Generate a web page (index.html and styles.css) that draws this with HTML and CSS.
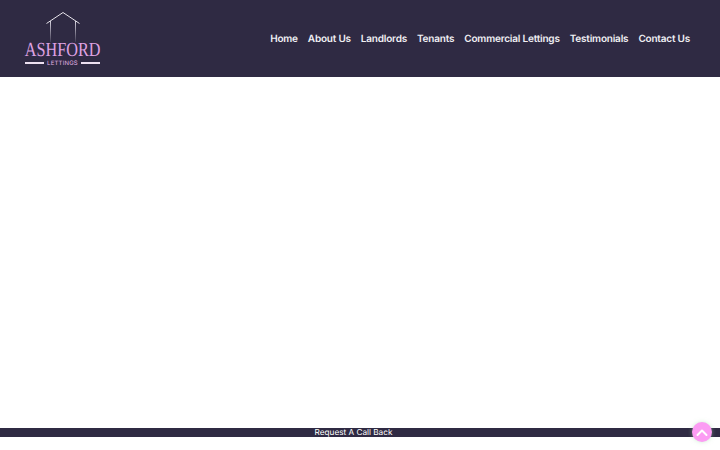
FILE: index.html
```html
<!DOCTYPE html>
<html>
<head>
  <meta charset="utf-8">
  <title>Ashford Lettings</title>
  <link rel="stylesheet" href="styles.css">
</head>
<body>
  <header class="header">
    <a class="logo" href="#">
      <svg class="logo-roof" width="36" height="31" viewBox="0 0 36 31">
        <defs>
          <linearGradient id="wall" x1="0" y1="0" x2="0" y2="1">
            <stop offset="0" stop-color="#d8d4e0"/>
            <stop offset="1" stop-color="#d8d4e0" stop-opacity="0.1"/>
          </linearGradient>
        </defs>
        <path d="M1.5 12.5 L18 1.5 L34.5 12.5" fill="none" stroke="#e6e3ea" stroke-width="1"/>
        <rect x="5" y="10" width="1" height="21" fill="url(#wall)"/>
        <rect x="30" y="10" width="1" height="21" fill="url(#wall)"/>
      </svg>
      <span class="logo-name">ASHFORD</span>
      <span class="logo-sub">LETTINGS</span>
    </a>
    <nav class="nav">
      <a href="#">Home</a>
      <a href="#">About Us</a>
      <a href="#">Landlords</a>
      <a href="#">Tenants</a>
      <a href="#">Commercial Lettings</a>
      <a href="#">Testimonials</a>
      <a href="#">Contact Us</a>
    </nav>
  </header>
  <main class="content"></main>
  <div class="callback">
    <a href="#">Request A Call Back</a>
  </div>
  <div class="page-end"></div>
  <a class="to-top" href="#">
    <svg width="14" height="9" viewBox="0 0 14 9">
      <path d="M2.5 7 L7 2.5 L11.5 7" fill="none" stroke="#fff" stroke-width="2" stroke-linecap="round" stroke-linejoin="round"/>
    </svg>
  </a>
</body>
</html>
```

FILE: styles.css
```css
* {
  box-sizing: border-box;
}

html, body {
  height: 100%;
}

body {
  margin: 0;
  display: flex;
  flex-direction: column;
  overflow: hidden;
  background: #ffffff;
  font-family: 'Inter', 'Liberation Sans', sans-serif;
  text-rendering: geometricPrecision;
}

a {
  text-decoration: none;
  color: inherit;
}

.header {
  height: 77px;
  flex: none;
  display: flex;
  align-items: center;
  justify-content: space-between;
  padding: 0 30px 0 25px;
  background: #2f2a43;
}

.logo {
  width: 75px;
  display: flex;
  flex-direction: column;
  align-items: center;
  padding-top: 1px;
}

.logo-roof {
  display: block;
}

.logo-name {
  font-family: 'Liberation Serif', serif;
  font-size: 20px;
  line-height: 16px;
  color: #dfa2e2;
  white-space: nowrap;
  transform: scaleX(0.81);
}

.logo-sub {
  width: 100%;
  display: flex;
  align-items: center;
  gap: 3px;
  margin-top: 1px;
  font-size: 6px;
  line-height: 9px;
  letter-spacing: 0.2px;
  color: #e2b4e6;
  white-space: nowrap;
}

.logo-sub::before,
.logo-sub::after {
  content: "";
  flex: 1;
  height: 2px;
  background: #ecdff0;
}

.nav {
  display: flex;
  gap: 10px;
}

.nav a {
  font-size: 10px;
  line-height: 16px;
  font-weight: 600;
  letter-spacing: -0.2px;
  color: #f1f0f4;
  white-space: nowrap;
}

.content {
  flex: 1;
}

.callback {
  height: 9px;
  flex: none;
  display: flex;
  justify-content: center;
  padding-right: 13px;
  background: #2f2a43;
}

.callback a {
  font-size: 8.2px;
  line-height: 9px;
  color: #ffffff;
  white-space: nowrap;
}

.page-end {
  height: 13px;
  flex: none;
}

.to-top {
  position: absolute;
  left: 692px;
  top: 422px;
  width: 20px;
  height: 20px;
  border-radius: 50%;
  display: flex;
  align-items: center;
  justify-content: center;
  background: #fb9cf3;
  box-shadow: 0 0 4px rgba(160, 220, 170, 0.5);
}
```
